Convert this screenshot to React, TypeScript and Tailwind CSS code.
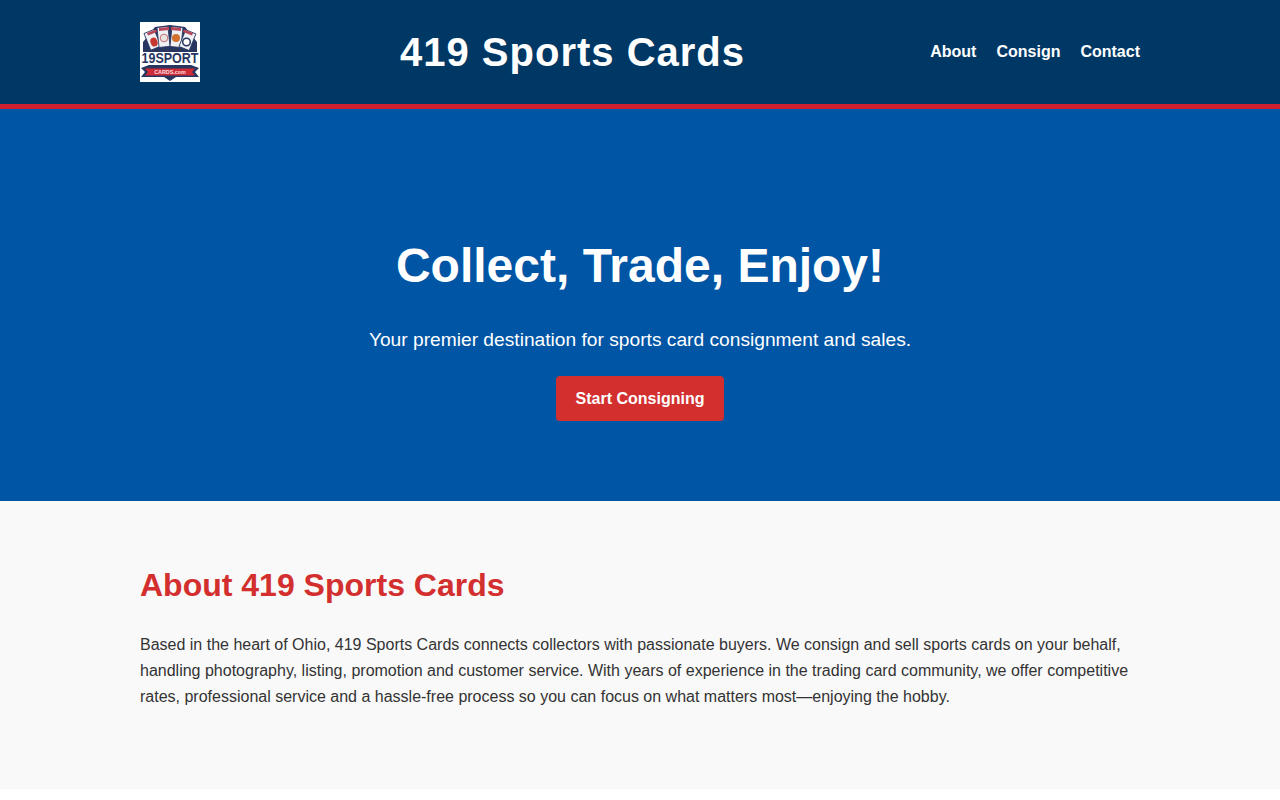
function Logo() {
  return (
    <svg width="60" height="60" viewBox="0 0 60 60" className="block bg-white shrink-0">
      <path d="M3 20 L15 5 L30 3 L45 5 L57 20 L57 30 L3 30 Z" fill="#27355f" />
      <g stroke="#27355f" strokeWidth="0.8">
        <rect x="7" y="9" width="11" height="18" fill="#eef0f4" transform="rotate(-22 12 18)" />
        <rect x="18" y="5" width="11" height="20" fill="#eef0f4" transform="rotate(-6 23 15)" />
        <rect x="31" y="5" width="11" height="20" fill="#eef0f4" transform="rotate(6 36 15)" />
        <rect x="42" y="9" width="11" height="18" fill="#eef0f4" transform="rotate(22 47 18)" />
      </g>
      <path d="M7 11 L16 7.5 L17 10 L8 13.5 Z M19 6 L29 5 L29 8 L19 9 Z M31 5 L41 6 L41 9 L31 8 Z M44 7.5 L53 11 L52 13.5 L43 10 Z" fill="#b8475a" />
      <ellipse cx="14" cy="20" rx="3.5" ry="4.6" fill="#c7372f" transform="rotate(-20 14 20)" />
      <circle cx="24" cy="16" r="3.8" fill="#e9e4de" stroke="#b9505a" strokeWidth="0.8" />
      <circle cx="36" cy="16" r="4" fill="#d2702c" />
      <circle cx="46.5" cy="20" r="3.8" fill="#ffffff" stroke="#27355f" strokeWidth="1.5" />
      <rect x="0" y="30" width="60" height="12" fill="#ffffff" />
      <text x="30" y="35.7" transform="scale(1 1.15)" textAnchor="middle" fontFamily="'Liberation Sans', sans-serif" fontWeight="700" fontSize="12.5" fill="#27355f">19SPORT</text>
      <path d="M1 46 L9 43 L51 43 L59 46 L55 50 L59 55 L36 55 L30 59 L24 55 L1 55 L5 50 Z" fill="#27355f" />
      <path d="M5 46.5 L55 46.5 L52 50 L55 53.5 L5 53.5 L8 50 Z" fill="#cf2a36" />
      <text x="30" y="52" textAnchor="middle" fontFamily="'Liberation Sans', sans-serif" fontWeight="700" fontSize="5.4" fill="#f6dfe0">CARDS.com</text>
    </svg>
  );
}

export default function App() {
  return (
    <div className="font-['Liberation_Sans',Arial,sans-serif] text-[#333333]">
      <header className="bg-[#003865] border-b-[5px] border-[#ce2031] h-[109px] px-[140px] flex items-start">
        <div className="pt-[22px] w-[260px]">
          <Logo />
        </div>
        <h1 className="text-[40px] leading-[46px] font-bold text-white tracking-[1px] mt-[29px]">419 Sports Cards</h1>
        <nav className="ml-auto flex gap-5 mt-[43px] text-white font-bold text-[16px] leading-[18px]">
          <a>About</a>
          <a>Consign</a>
          <a>Contact</a>
        </nav>
      </header>
      <section className="bg-[#0055a5] h-[392px] flex flex-col items-center text-white">
        <h2 className="text-[48px] leading-[55px] font-bold mt-[129px]">Collect, Trade, Enjoy!</h2>
        <p className="text-[19.2px] leading-[22px] mt-[36px]">Your premier destination for sports card consignment and sales.</p>
        <a className="mt-[25px] bg-[#d32f2f] rounded-[4px] px-5 h-[45px] flex items-center font-bold text-[16px]">Start Consigning</a>
      </section>
      <section className="bg-[#f9f9f9] h-[288px] px-[140px] pt-[66px]">
        <h2 className="text-[32px] leading-[37px] font-bold text-[#d32f2f]">About 419 Sports Cards</h2>
        <p className="mt-[28px] text-[16px] leading-[26px]">
          Based in the heart of Ohio, 419 Sports Cards connects collectors with passionate buyers. We consign and sell sports cards on your behalf, handling photography, listing, promotion and customer service. With years of experience in the trading card community, we offer competitive rates, professional service and a hassle-free process so you can focus on what matters most—enjoying the hobby.
        </p>
      </section>
    </div>
  );
}
